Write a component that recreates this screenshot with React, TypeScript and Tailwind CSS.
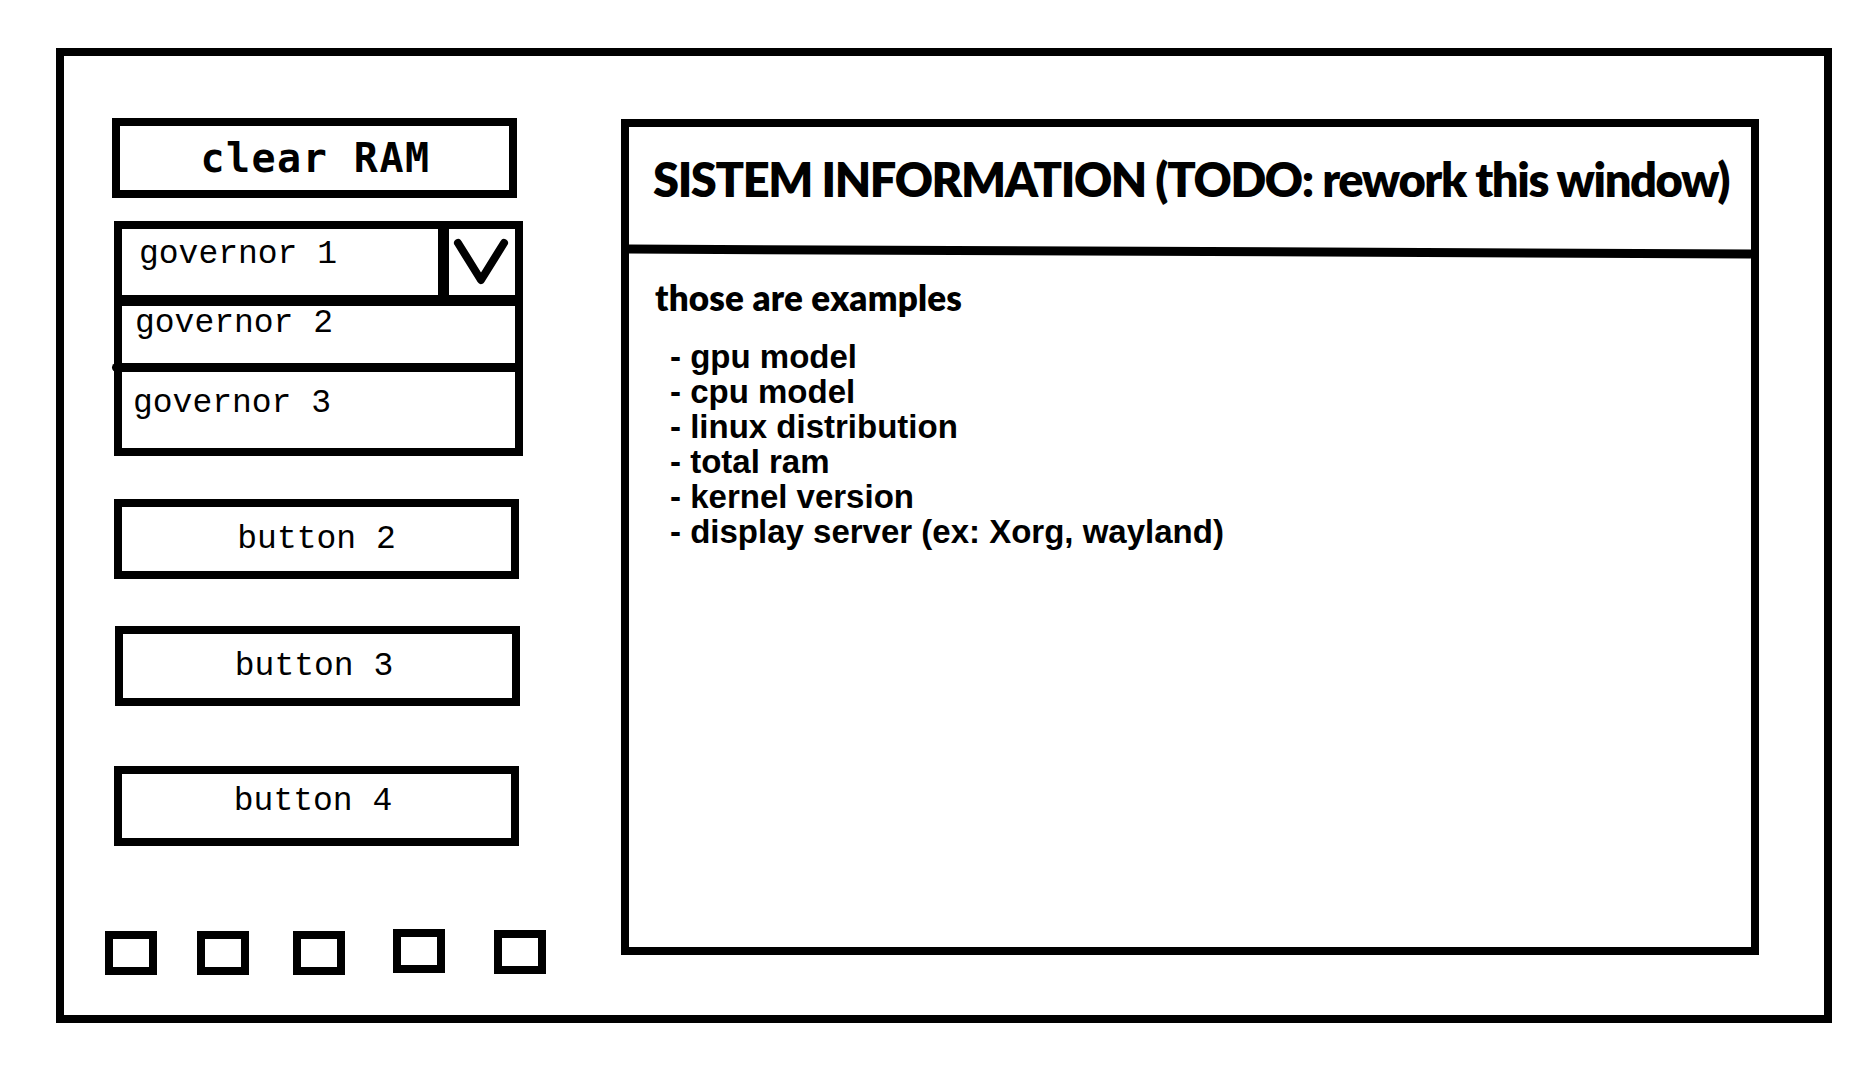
const mono = "font-['Liberation_Mono',monospace]"

function OutlineButton({ label, className }: { label: string; className: string }) {
  return (
    <div
      className={`h-[80px] w-[405px] border-[8px] border-black flex items-center justify-center text-[33px] leading-[37px] text-black ${mono} ${className}`}
    >
      {label}
    </div>
  )
}

function GovernorSelect() {
  return (
    <div className={`ml-[9px] mt-[23px] w-[409px] border-[8px] border-black text-[33px] text-black ${mono}`}>
      {/* selected row + chevron */}
      <div className="flex h-[77px] border-b-[11px] border-black">
        <div className="flex-1 border-r-[11px] border-black pl-[17px] pt-[7px] leading-[37px]">governor 1</div>
        <div className="w-[66px] h-[66px]">
          <svg width="66" height="66" viewBox="0 0 66 66">
            <polyline
              points="9,14 32,51 55,14"
              fill="none"
              stroke="black"
              strokeWidth="8"
              strokeLinecap="round"
              strokeLinejoin="round"
            />
          </svg>
        </div>
      </div>
      <div className="h-[57px] pl-[13px] leading-[35px]">governor 2</div>
      {/* sketchy divider, pokes a little past the left edge */}
      <div className="h-[9px] -ml-[10px] bg-black rounded-l-full" />
      <div className="h-[76px] pl-[11px] pt-[13px] leading-[37px]">governor 3</div>
    </div>
  )
}

const squares = [
  'ml-0 mt-[2px]',
  'ml-[40px] mt-[2px]',
  'ml-[44px] mt-[2px]',
  'ml-[48px] mt-0',
  'ml-[49px] mt-[1px]',
]

const infoItems = [
  'gpu model',
  'cpu model',
  'linux distribution',
  'total ram',
  'kernel version',
  'display server (ex: Xorg, wayland)',
]

export default function App() {
  return (
    <div className="min-h-screen w-full bg-white pt-[48px] pl-[56px]">
      <div className="w-[1776px] h-[975px] border-[8px] border-black flex">
        {/* left controls */}
        <div className="w-[557px] shrink-0 pl-[41px] flex flex-col items-start">
          <div className="ml-[7px] mt-[62px] w-[405px] h-[80px] border-[8px] border-black flex items-center justify-center">
            <span className="font-['DejaVu_Sans_Mono',monospace] font-bold text-[40px] leading-[46px] tracking-[1.5px] text-black pl-[2px]">
              clear RAM
            </span>
          </div>

          <GovernorSelect />

          <OutlineButton label="button 2" className="ml-[9px] mt-[43px]" />
          <OutlineButton label="button 3" className="ml-[10px] mt-[47px] pr-[7px]" />
          <OutlineButton label="button 4" className="ml-[9px] mt-[60px] pr-[7px] pb-[10px]" />

          <div className="mt-[83px] flex items-start">
            {squares.map((c, i) => (
              <div key={i} className={`w-[52px] h-[44px] border-[8px] border-black ${c}`} />
            ))}
          </div>
        </div>

        {/* system info window */}
        <div className="mt-[63px] w-[1138px] h-[836px] border-[8px] border-black flex flex-col">
          <div className="h-[120px] pl-[24px] pt-[29px]">
            <h1 className="font-['Lato',sans-serif] font-extrabold text-[47px] leading-[47px] tracking-[-1.4px] text-black whitespace-nowrap">
              SISTEM INFORMATION (TODO: rework this window)
            </h1>
          </div>
          <div className="h-[9px] bg-black rotate-[0.25deg]" />
          <div className="pl-[26px] pt-[24px]">
            <p className="font-['Lato',sans-serif] font-extrabold text-[35px] leading-[35px] tracking-[0.2px] text-black">
              those are examples
            </p>
            <ul className="mt-[24px] pl-[15px] font-['Liberation_Sans',sans-serif] font-bold text-[33px] leading-[35px] text-black">
              {infoItems.map(item => (
                <li key={item} className="whitespace-nowrap">- {item}</li>
              ))}
            </ul>
          </div>
        </div>
      </div>
    </div>
  )
}
